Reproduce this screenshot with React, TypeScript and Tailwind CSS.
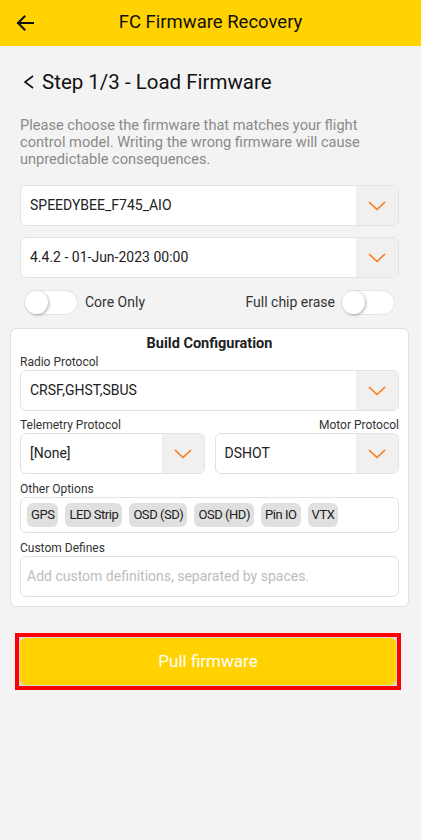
import React from "react";

const font = { fontFamily: "Roboto, 'Noto Sans', sans-serif" };

const Chevron = () => (
  <svg width="18" height="10" viewBox="0 0 18 10" fill="none">
    <path d="M1.5 1.5 L9 8.5 L16.5 1.5" stroke="#ff7a1a" strokeWidth="1.7" strokeLinecap="round" strokeLinejoin="round" />
  </svg>
);

const Select = ({ value, className = "" }: { value: string; className?: string }) => (
  <div className={`flex h-[41px] overflow-hidden rounded-md border border-[#e2e2e2] bg-white ${className}`}>
    <div className="flex flex-1 items-center pl-[9px] text-[14px] text-[#222]">{value}</div>
    <div className="flex w-[42px] items-center justify-center bg-[#f0f0f0]">
      <Chevron />
    </div>
  </div>
);

const Toggle = () => (
  <div className="flex h-[25px] w-[54px] items-center rounded-full border border-[#e4e4e4] bg-white">
    <div className="h-[23px] w-[23px] rounded-full bg-white shadow-[1px_1px_3px_rgba(0,0,0,0.3)]" />
  </div>
);

const Label = ({ children }: { children: React.ReactNode }) => (
  <div className="text-[12px] leading-[16px] text-[#333]">{children}</div>
);

export default function App() {
  const chips = ["GPS", "LED Strip", "OSD (SD)", "OSD (HD)", "Pin IO", "VTX"];
  return (
    <div style={font} className="min-h-[840px] w-[421px] bg-[#f3f3f3]">
      {/* Header */}
      <div className="relative flex h-[46px] items-center justify-center bg-[#ffd200]">
        <svg className="absolute left-[15px] top-[13px]" width="20" height="20" viewBox="0 0 20 20" fill="none">
          <path d="M18 10 H3 M9.5 3.5 L3 10 L9.5 16.5" stroke="#111" strokeWidth="2" strokeLinecap="square" />
        </svg>
        <div className="text-[18.5px] text-[#111]">FC Firmware Recovery</div>
      </div>

      <div className="pl-[20px] pr-[22px]">
        <div className="flex items-center pt-[22px] text-[20.5px] leading-[28px] text-[#111]">
          <svg width="14" height="16" viewBox="0 0 14 16" fill="none" className="mr-[6px] ml-[2px]">
            <path d="M11 2 L3 8 L11 14" stroke="#111" strokeWidth="1.6" />
          </svg>
          Step 1/3 - Load Firmware
        </div>

        <p className="mt-[21px] text-[14.6px] leading-[17px] text-[#8a8a8a]">
          Please choose the firmware that matches your flight control model. Writing the wrong firmware will cause unpredictable consequences.
        </p>

        <Select value="SPEEDYBEE_F745_AIO" className="mt-[17px]" />
        <Select value="4.4.2 - 01-Jun-2023 00:00" className="mt-[11px]" />

        <div className="mt-[12px] flex items-center justify-between px-[4px]">
          <div className="flex items-center gap-[7px]">
            <Toggle />
            <span className="text-[14px] text-[#333]">Core Only</span>
          </div>
          <div className="flex items-center gap-[6px]">
            <span className="text-[14px] text-[#333]">Full chip erase</span>
            <Toggle />
          </div>
        </div>
      </div>

      {/* Build configuration card */}
      <div className="ml-[10px] mr-[12px] mt-[13px] rounded-md border border-[#e0e0e0] bg-white px-[9px] pb-[9px] pt-[6px]">
        <div className="text-center text-[14.5px] font-bold leading-[18px] text-[#222]">Build Configuration</div>
        <div className="mt-[1px]">
          <Label>Radio Protocol</Label>
        </div>
        <Select value="CRSF,GHST,SBUS" />

        <div className="mt-[6px] flex justify-between">
          <Label>Telemetry Protocol</Label>
          <Label>Motor Protocol</Label>
        </div>
        <div className="flex gap-[10px]">
          <Select value="[None]" className="flex-1" />
          <Select value="DSHOT" className="flex-1" />
        </div>

        <div className="mt-[7px]">
          <Label>Other Options</Label>
        </div>
        <div className="flex h-[36px] items-center gap-[7px] rounded-md border border-[#e2e2e2] px-[6px]">
          {chips.map((c) => (
            <span
              key={c}
              className="rounded-md bg-[#e0e0e0] px-[4px] py-[3px] text-[13px] leading-[18px] tracking-[-0.45px] text-[#222]"
            >
              {c}
            </span>
          ))}
        </div>

        <div className="mt-[7px]">
          <Label>Custom Defines</Label>
        </div>
        <div className="flex h-[41px] items-center rounded-md border border-[#e2e2e2] px-[6px] text-[14px] text-[#bdbdbd]">
          Add custom definitions, separated by spaces.
        </div>
      </div>

      <div className="ml-[15px] mr-[20px] mt-[26px] border-[4px] border-[#ff0000] bg-[#d8d8d8] p-px">
        <div className="flex h-[47px] items-center justify-center rounded-md bg-[#ffd200] text-[17px] text-white">
          Pull firmware
        </div>
      </div>
    </div>
  );
}
